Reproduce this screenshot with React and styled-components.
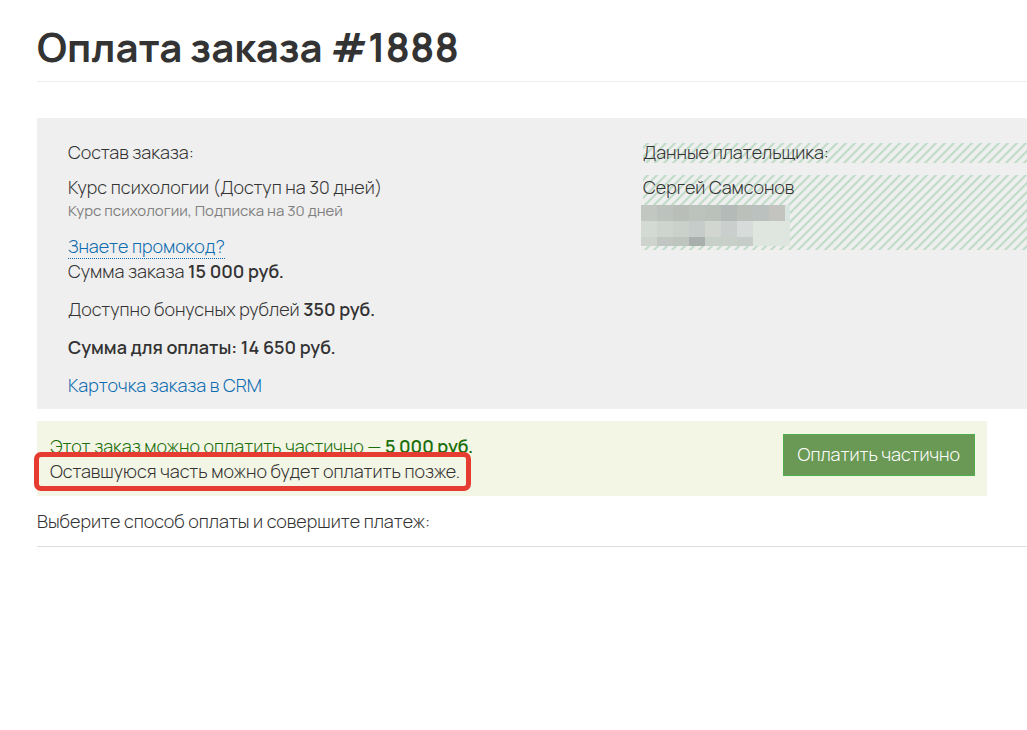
import { useState } from 'react';
import styled, { createGlobalStyle } from 'styled-components';

const GlobalStyle = createGlobalStyle`
  * {
    box-sizing: border-box;
  }

  body {
    margin: 0;
    background-color: #fff;
    color: #333;
    font-family: Manrope, Inter, sans-serif;
    font-size: 18px;
    font-weight: 300;
    line-height: 25px;
    overflow-x: hidden;
  }
`;

const Page = styled.main`
  padding: 20px 0 0 37px;
`;

const Title = styled.h1`
  margin: 0 0 36px;
  padding-bottom: 7px;
  border-bottom: 1px solid #eee;
  font-size: 40px;
  font-weight: 700;
  line-height: 54px;
`;

const OrderPanel = styled.section`
  display: grid;
  grid-template-columns: 575px 1fr;
  margin-bottom: 12px;
  padding: 22px 0 11px 31px;
  background-color: #efefef;
`;

const Text = styled.p`
  margin: 0 0 ${({ $gap = 0 }) => $gap}px;
`;

const Muted = styled.p`
  margin: 0 0 12px;
  color: #808080;
  font-size: 15px;
  font-weight: 400;
  line-height: 22px;
`;

const Strong = styled.strong`
  font-weight: 600;
`;

const Link = styled.a`
  color: #0b6cb0;
  text-decoration: none;
`;

const PromoLink = styled(Link)`
  border-bottom: 1px dotted #0b6cb0;
`;

const Payer = styled.div`
  padding-top: 3px;
`;

const Striped = styled.div`
  height: ${({ $height }) => $height}px;
  margin-bottom: 12px;
  background-image: repeating-linear-gradient(
    135deg,
    #efefef 0%,
    #efefef 15%,
    #bddac5 25%,
    #bddac5 31%,
    #efefef 41%,
    #efefef 50%
  );
  background-size: 9px 9px;
  line-height: ${({ $line }) => $line}px;
`;

const Mosaic = styled.div`
  display: grid;
  grid-template-columns: repeat(9, 16px) 5px;
  grid-template-rows: 16px 16px 9px;
  width: 149px;
  margin-left: -2px;
`;

const Tile = styled.span`
  background-color: ${({ $color }) => $color};
`;

const PartialPanel = styled.section`
  display: flex;
  align-items: flex-start;
  justify-content: space-between;
  margin: 0 40px 13px 0;
  padding: 13px 12px 12px 13px;
  background-color: #f3f5e5;
`;

const Green = styled.p`
  margin: 0;
  color: #1b6e0b;
`;

const Highlighted = styled.p`
  position: relative;
  width: fit-content;
  margin: 0;

  &::after {
    content: '';
    position: absolute;
    inset: -7px -11px -7px -16px;
    border: 5px solid #e63b30;
    border-radius: 7px;
  }
`;

const PayButton = styled.button`
  height: 42px;
  padding: 0 14px 2px;
  border: 1px solid #4cae4c;
  background-color: #6a9955;
  color: #fff;
  font: inherit;
  cursor: pointer;
`;

const PaymentHint = styled.p`
  margin: 0;
  padding-bottom: 12px;
  border-bottom: 1px solid #ddd;
`;

const tiles = [
  '#c3c7c1', '#bcc3be', '#b9beb9', '#bbc3bc', '#bac1bb', '#b3bab7', '#bbc0bb', '#bac1bf', '#c3c4c0', '#d8e4df',
  '#d3d9d3', '#cdd5ce', '#cad1ca', '#c6ccca', '#d1d6d0', '#cacfcd', '#d7dcda', '#dfe6df', '#dfe6df', '#dde5de',
  '#ced3cd', '#c1c6c2', '#bec5bf', '#a9afad', '#c7cfc9', '#c8cfc8', '#c6cdc8', '#dfe6df', '#dfe6df', '#dfe6df',
];

export default function App() {
  const [paying, setPaying] = useState(false);

  return (
    <>
      <GlobalStyle />
      <Page>
        <Title>Оплата заказа #1888</Title>

        <OrderPanel>
          <div>
            <Text $gap={10}>Состав заказа:</Text>
            <Text>Курс психологии (Доступ на 30 дней)</Text>
            <Muted>Курс психологии, Подписка на 30 дней</Muted>
            <Text>
              <PromoLink href="#promo">Знаете промокод?</PromoLink>
            </Text>
            <Text $gap={13}>
              Сумма заказа <Strong>15 000 руб.</Strong>
            </Text>
            <Text $gap={13}>
              Доступно бонусных рублей <Strong>350 руб.</Strong>
            </Text>
            <Text $gap={13}>
              <Strong>Сумма для оплаты: 14 650 руб.</Strong>
            </Text>
            <Text>
              <Link href="#crm">Карточка заказа в CRM</Link>
            </Text>
          </div>

          <Payer>
            <Striped $height={20} $line={18}>Данные плательщика:</Striped>
            <Striped $height={75} $line={25}>
              <Text $gap={5}>Сергей Самсонов</Text>
              <Mosaic>
                {tiles.map((color, i) => (
                  <Tile key={i} $color={color} />
                ))}
              </Mosaic>
            </Striped>
          </Payer>
        </OrderPanel>

        <PartialPanel>
          <div>
            <Green>
              Этот заказ можно оплатить частично — <Strong>5 000 руб.</Strong>
            </Green>
            <Highlighted>Оставшуюся часть можно будет оплатить позже.</Highlighted>
          </div>
          <PayButton type="button" disabled={paying} onClick={() => setPaying(true)}>
            Оплатить частично
          </PayButton>
        </PartialPanel>

        <PaymentHint>Выберите способ оплаты и совершите платеж:</PaymentHint>
      </Page>
    </>
  );
}
